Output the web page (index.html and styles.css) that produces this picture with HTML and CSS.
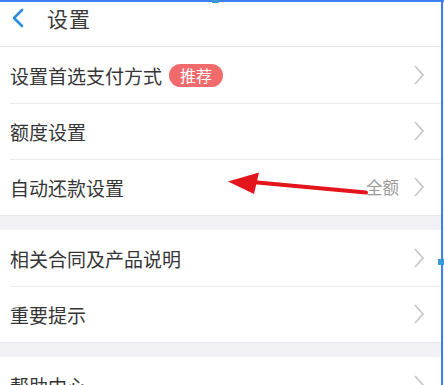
FILE: index.html
```html
<!DOCTYPE html>
<html lang="zh-CN">
<head>
<meta charset="utf-8">
<title>设置</title>
<link rel="stylesheet" href="styles.css">
</head>
<body>
<div class="screen">
  <header class="topbar">
    <svg class="back" width="14" height="20" viewBox="0 0 14 20"><path d="M11 2 L3 10 L11 18" fill="none" stroke="#2f8de0" stroke-width="2.6" stroke-linecap="round" stroke-linejoin="round"/></svg>
    <span class="title">设置</span>
  </header>
  <section class="group">
    <div class="row"><span class="label">设置首选支付方式</span><span class="badge">推荐</span><span class="spacer"></span><svg class="chev" width="12" height="22" viewBox="0 0 12 22"><path d="M2 2 L10 11 L2 20" fill="none" stroke="#c8c8cc" stroke-width="1.8"/></svg></div>
    <div class="row"><span class="label">额度设置</span><span class="spacer"></span><svg class="chev" width="12" height="22" viewBox="0 0 12 22"><path d="M2 2 L10 11 L2 20" fill="none" stroke="#c8c8cc" stroke-width="1.8"/></svg></div>
    <div class="row"><span class="label">自动还款设置</span><span class="spacer"></span><span class="value">全额</span><svg class="chev" width="12" height="22" viewBox="0 0 12 22"><path d="M2 2 L10 11 L2 20" fill="none" stroke="#c8c8cc" stroke-width="1.8"/></svg></div>
  </section>
  <section class="group">
    <div class="row"><span class="label">相关合同及产品说明</span><span class="spacer"></span><svg class="chev" width="12" height="22" viewBox="0 0 12 22"><path d="M2 2 L10 11 L2 20" fill="none" stroke="#c8c8cc" stroke-width="1.8"/></svg></div>
    <div class="row"><span class="label">重要提示</span><span class="spacer"></span><svg class="chev" width="12" height="22" viewBox="0 0 12 22"><path d="M2 2 L10 11 L2 20" fill="none" stroke="#c8c8cc" stroke-width="1.8"/></svg></div>
  </section>
  <section class="group">
    <div class="row"><span class="label">帮助中心</span><span class="spacer"></span><svg class="chev" width="12" height="22" viewBox="0 0 12 22"><path d="M2 2 L10 11 L2 20" fill="none" stroke="#c8c8cc" stroke-width="1.8"/></svg></div>
  </section>
  <svg class="arrow" width="444" height="385" viewBox="0 0 444 385">
    <path d="M366 192.5 L252 182" stroke="#e3141c" stroke-width="4" stroke-linecap="round"/>
    <polygon points="228,181.5 259,172.5 254,194" fill="#e3141c"/>
  </svg>
  <div class="sel-top"></div>
  <div class="sel-right"></div>
  <div class="handle h-top"></div>
  <div class="handle h-right"></div>
</div>
</body>
</html>
```
FILE: styles.css
```css
* { box-sizing: border-box; }
html, body { margin: 0; padding: 0; background: #fff; }
body {
  font-family: "Noto Sans CJK SC", "Noto Sans", sans-serif;
  color: #333;
}
.screen {
  position: relative;
  width: 444px;
  height: 385px;
  overflow: hidden;
  background: #f2f2f6;
  padding-right: 3px;
}
.topbar {
  height: 47px;
  background: #fff;
  border-bottom: 1px solid #e4e4e8;
  display: flex;
  align-items: center;
  padding-left: 11px;
  padding-bottom: 10px;
}
.back { margin-right: 22px; }
.title { font-size: 21px; color: #3a3a3a; letter-spacing: 1px; }
.group {
  background: #fff;
  border-bottom: 1px solid #e6e6ea;
  margin-bottom: 14px;
}
.row {
  height: 56px;
  display: flex;
  align-items: center;
  padding: 0 16px 0 10px;
  position: relative;
}
.row + .row::before {
  content: "";
  position: absolute;
  left: 10px;
  right: 0;
  top: 0;
  height: 1px;
  background: #ececf0;
}
.label { font-size: 19px; color: #353535; }
.badge {
  margin-left: 7px;
  height: 23px;
  padding: 0 11px;
  border-radius: 12px;
  background: #f26b6c;
  color: #fff;
  font-size: 16px;
  line-height: 23px;
}
.spacer { flex: 1; }
.value { font-size: 16.5px; color: #9a9a9a; margin-right: 14px; }
.chev { display: block; }
.arrow { position: absolute; left: 0; top: 0; pointer-events: none; }
.sel-top { position: absolute; left: 0; top: 0; width: 444px; height: 2px; background: #3b7ff2; }
.sel-right { position: absolute; left: 441px; top: 0; width: 1.5px; height: 385px; background: #3b7ff2; }
.handle { position: absolute; background: #3a9ad8; }
.h-top { left: 212px; top: 0; width: 7px; height: 3px; }
.h-right { left: 438px; top: 259px; width: 6px; height: 6px; }
```
